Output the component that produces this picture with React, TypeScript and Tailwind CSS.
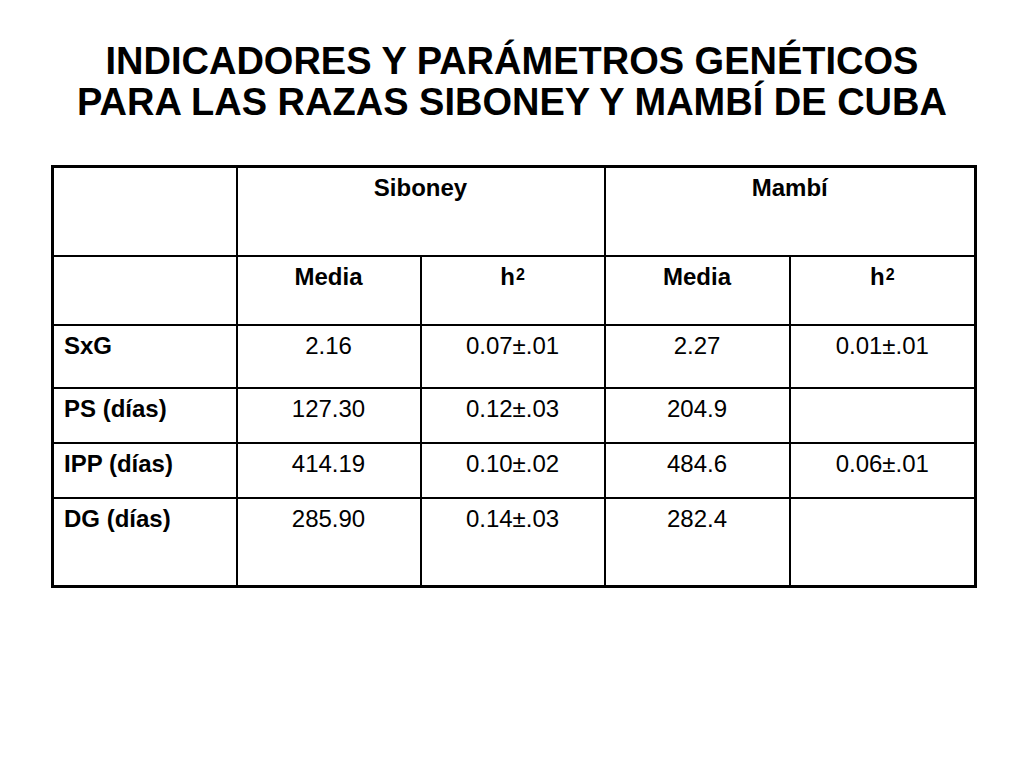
const rows = [
  { label: "SxG", v: ["2.16", "0.07±.01", "2.27", "0.01±.01"], h: "h-[63px]" },
  { label: "PS (días)", v: ["127.30", "0.12±.03", "204.9", ""], h: "h-[55px]" },
  { label: "IPP (días)", v: ["414.19", "0.10±.02", "484.6", "0.06±.01"], h: "h-[55px]" },
  { label: "DG (días)", v: ["285.90", "0.14±.03", "282.4", ""], h: "h-[89px]" },
];

const cell = "border-2 border-black align-top pt-[6px] text-center";

function H2() {
  return (
    <span>
      h<span className="text-[16px] leading-[16px] align-top relative top-[4px] ml-[1px]">2</span>
    </span>
  );
}

export default function App() {
  return (
    <div
      className="w-[1024px] h-[768px] bg-white text-black overflow-hidden"
      style={{ fontFamily: '"Liberation Sans", Arial, sans-serif' }}
    >
      <h1 className="pt-[41px] text-center font-bold text-[38px] leading-[41px]">
        INDICADORES Y PARÁMETROS GENÉTICOS
        <br />
        PARA LAS RAZAS SIBONEY Y MAMBÍ DE CUBA
      </h1>

      <table className="mt-[42px] ml-[51px] w-[923px] table-fixed border-collapse border-[3px] border-black text-[24px] leading-[28px]">
        <colgroup>
          <col className="w-[184px]" />
          <col className="w-[184px]" />
          <col className="w-[184px]" />
          <col className="w-[185px]" />
          <col className="w-[186px]" />
        </colgroup>
        <tbody>
          <tr className="h-[89px] font-bold">
            <td className={cell}></td>
            <td className={cell} colSpan={2}>Siboney</td>
            <td className={cell} colSpan={2}>Mambí</td>
          </tr>
          <tr className="h-[69px] font-bold">
            <td className={cell}></td>
            <td className={cell}>Media</td>
            <td className={cell}><H2 /></td>
            <td className={cell}>Media</td>
            <td className={cell}><H2 /></td>
          </tr>
          {rows.map((r) => (
            <tr key={r.label} className={r.h}>
              <td className="border-2 border-black align-top pt-[6px] pl-[10px] text-left font-bold">
                {r.label}
              </td>
              {r.v.map((v, i) => (
                <td key={i} className={cell}>{v}</td>
              ))}
            </tr>
          ))}
        </tbody>
      </table>
    </div>
  );
}
